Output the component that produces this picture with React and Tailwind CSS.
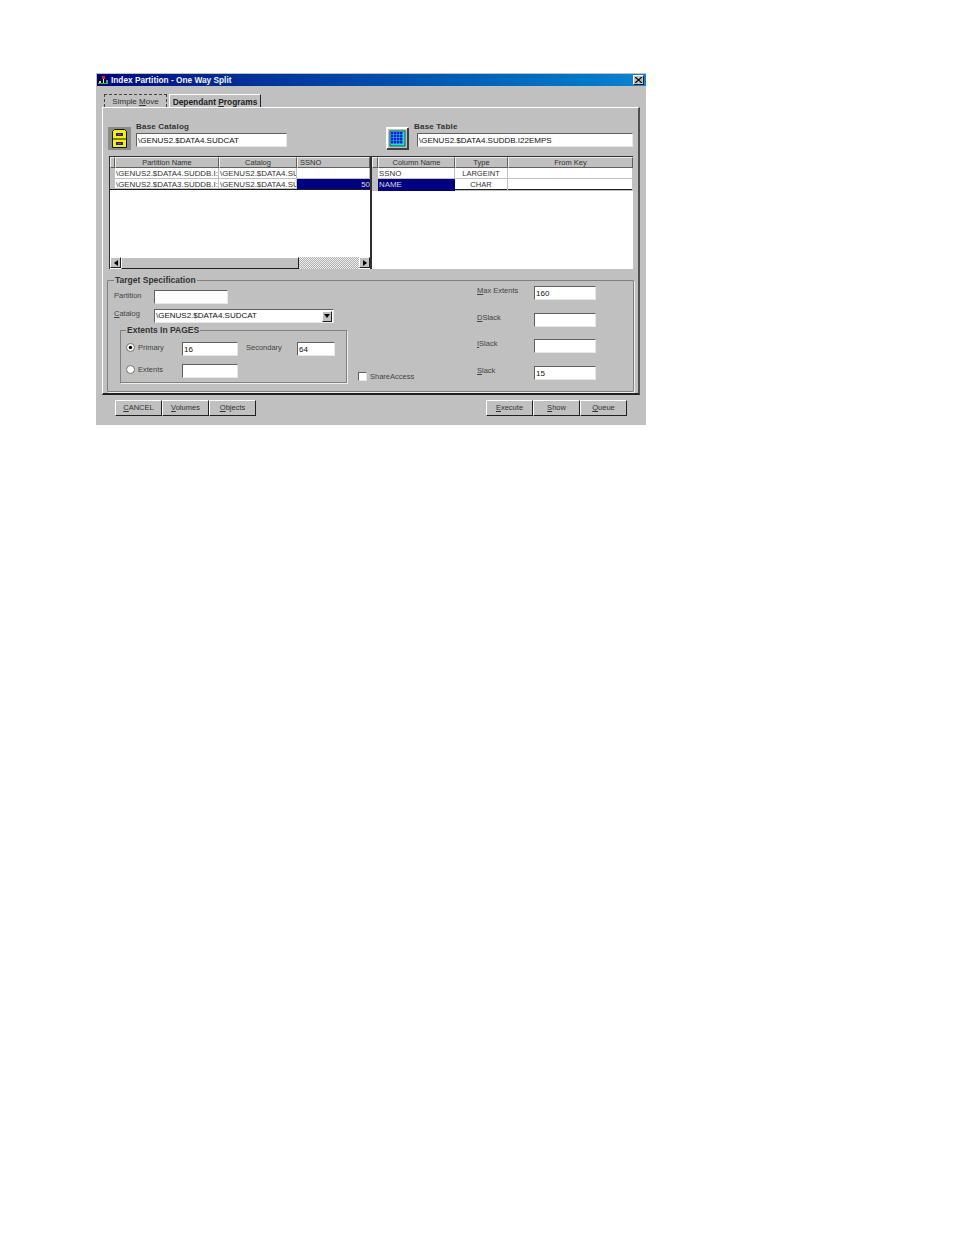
import React from 'react';

const raised = 'border border-t-white border-l-white border-b-[#202020] border-r-[#202020] bg-[#c0c0c0]';
const sunken = 'border border-t-[#606060] border-l-[#606060] border-b-[#e8e8e8] border-r-[#e8e8e8] bg-white';
const cell = 'overflow-hidden whitespace-nowrap border-r border-b border-[#c0c0c0] leading-[12px] px-px';
const head = 'overflow-hidden whitespace-nowrap text-center border border-t-[#eeeeee] border-l-[#eeeeee] border-b-[#606060] border-r-[#606060] bg-[#c0c0c0] text-[7.5px] leading-[9px]';

function Field({ value, className }) {
  return <div className={`${sunken} h-[14px] pl-px text-[8px] leading-[13px] text-[#111] overflow-hidden whitespace-nowrap ${className}`}>{value}</div>;
}

function Btn({ hot, rest }) {
  return (
    <button className={`${raised} w-[47px] h-[16px] text-[7.5px] leading-[12px] text-[#333]`}>
      <u>{hot}</u>{rest}
    </button>
  );
}

function AppIcon() {
  return (
    <svg width="12" height="10" viewBox="0 0 12 10" className="shrink-0">
      <rect width="12" height="10" fill="#000060" />
      <rect x="1" y="8" width="10" height="1" fill="#20c040" />
      <rect x="5" y="1" width="3" height="3" fill="#e02020" />
      <rect x="6" y="4" width="1" height="4" fill="#e0e0e0" />
      <rect x="2" y="6" width="2" height="2" fill="#e0e040" />
      <rect x="9" y="5" width="2" height="3" fill="#30c060" />
    </svg>
  );
}

function CatalogIcon() {
  return (
    <svg width="23" height="23" viewBox="0 0 23 23" className="shrink-0">
      <rect width="23" height="23" fill="#8a8a8a" />
      <path d="M4.5 4.5 6.5 2.5h10l2 2v16h-14z" fill="#f4f400" stroke="#111" />
      <path d="M4.5 12h14" stroke="#111" />
      <rect x="8" y="6" width="7" height="3" fill="#2020a0" />
      <rect x="10" y="7" width="3" height="1" fill="#e03030" />
      <rect x="8" y="15" width="7" height="3" fill="#2020a0" />
      <rect x="10" y="16" width="3" height="1" fill="#e03030" />
    </svg>
  );
}

function GridIcon() {
  return (
    <svg width="23" height="23" viewBox="0 0 23 23" className="shrink-0">
      <rect width="23" height="23" fill="#c0c0c0" />
      <path d="M1 22V1h21" fill="none" stroke="#fff" strokeWidth="2" />
      <path d="M1 22h21V1" fill="none" stroke="#404040" strokeWidth="2" />
      <rect x="4" y="4" width="15" height="15" fill="#20e0c8" stroke="#006060" />
      {[5, 8, 11, 14].map(x => [5, 8, 11, 14].map(y => (
        <rect key={`${x}-${y}`} x={x} y={y} width="2.5" height="2.5" fill="#1818e0" />
      )))}
    </svg>
  );
}

function Radio({ on }) {
  return (
    <svg width="9" height="9" viewBox="0 0 9 9" className="shrink-0 -mt-[4px]">
      <circle cx="4.5" cy="4.5" r="4" fill="#fff" stroke="#707070" />
      {on && <circle cx="4.5" cy="4.5" r="1.7" fill="#000" />}
    </svg>
  );
}

function Arrow({ dir }) {
  return (
    <div className={`${raised} w-[11px] h-[11px] flex items-center justify-center shrink-0`}>
      <svg width="4" height="6" viewBox="0 0 4 6">
        <path d={dir === 'l' ? 'M4 0v6L0 3z' : 'M0 0v6l4-3z'} fill="#000" />
      </svg>
    </div>
  );
}

export default function App() {
  return (
    <div className="h-[1235px] bg-white pt-[73px] pl-[96px] text-[#333]" style={{ fontFamily: '"Liberation Sans", Arial, sans-serif' }}>
      <div className="w-[550px] h-[352px] bg-[#c0c0c0] flex flex-col">
        {/* title bar */}
        <div className="h-[12px] mt-px ml-px flex items-center bg-gradient-to-r from-[#000080] to-[#1084d0] pr-[2px] shrink-0">
          <AppIcon />
          <span className="ml-[2px] text-[8.3px] font-bold text-[#f4f4f4] leading-[12px]">Index Partition - One Way Split</span>
          <div className={`${raised} ml-auto w-[11px] h-[10px] flex items-center justify-center`}>
            <svg width="7" height="6" viewBox="0 0 7 6"><path d="M0 0l7 6M7 0L0 6" stroke="#000" strokeWidth="1.2" /></svg>
          </div>
        </div>

        {/* tabs */}
        <div className="flex h-[13px] ml-[8px] mt-[8px] shrink-0 leading-[12px]">
          <div className="w-[63px] border border-dashed border-[#444] border-b-0 pt-px text-center text-[8px]">Simple <u>M</u>ove</div>
          <div className="w-[92px] ml-[2px] border-t border-l border-t-white border-l-white border-r border-r-[#202020] pt-px text-center font-bold text-[8.4px] text-[#222]">Dependant <u>P</u>rograms</div>
        </div>

        {/* tab page */}
        <div className="mx-[6px] h-[288px] border-t border-l border-t-white border-l-white border-r-2 border-r-[#505050] border-b-2 border-b-[#202020] flex flex-col shrink-0">
          <div className="flex h-[27px] mt-[15px] px-[5px] shrink-0">
            <div className="flex w-[278px]">
              <div className="mt-[4px]"><CatalogIcon /></div>
              <div className="ml-[5px]">
                <div className="font-bold text-[8px] leading-[10px] tracking-[0.2px] h-[7px] -mt-[1px] mb-[4px] text-[#333]">Base Catalog</div>
                <Field value={'\\GENUS2.$DATA4.SUDCAT'} className="w-[151px]" />
              </div>
            </div>
            <div className="flex ml-px">
              <div className="mt-[4px]"><GridIcon /></div>
              <div className="ml-[5px]">
                <div className="font-bold text-[8px] leading-[10px] tracking-[0.2px] h-[7px] -mt-[1px] mb-[4px] text-[#333]">Base Table</div>
                <Field value={'\\GENUS2.$DATA4.SUDDB.I22EMPS'} className="w-[216px] ml-[3px]" />
              </div>
            </div>
          </div>

          {/* grids */}
          <div className="flex h-[113px] ml-[6px] mt-[6px] w-[524px] shrink-0 text-[7.9px] text-[#333]">
            <div className="w-[263px] bg-white border-t border-l border-[#303030] border-r-2 border-r-[#303030] flex flex-col">
              <div className="grid grid-cols-[5px_104px_78px_73px] h-[11px]">
                <div className={head}></div>
                <div className={head}>Partition Name</div>
                <div className={head}>Catalog</div>
                <div className={`${head} text-left pl-[2px]`}>SSNO</div>
              </div>
              <div className="grid grid-cols-[5px_104px_78px_73px] h-[11px]">
                <div className="bg-[#c0c0c0]"></div>
                <div className={cell}>{'\\GENUS2.$DATA4.SUDDB.I:'}</div>
                <div className={cell}>{'\\GENUS2.$DATA4.SUDCAT'}</div>
                <div className={cell}></div>
              </div>
              <div className="grid grid-cols-[5px_104px_78px_73px] h-[11px] border-b border-[#202020]">
                <div className="bg-[#c0c0c0]"></div>
                <div className={cell}>{'\\GENUS2.$DATA3.SUDDB.I:'}</div>
                <div className={cell}>{'\\GENUS2.$DATA4.SUDCAT'}</div>
                <div className="bg-[#000080] text-[#dddddd] text-right leading-[12px] overflow-hidden">50</div>
              </div>
              <div className="flex-1"></div>
              <div className="h-[12px] flex">
                <Arrow dir="l" />
                <div className={`${raised} w-[178px]`}></div>
                <div className="flex-1 bg-[repeating-conic-gradient(#b0b0b0_0_25%,#eeeeee_0_50%)] bg-[length:2px_2px]"></div>
                <Arrow dir="r" />
              </div>
            </div>
            <div className="w-[261px] bg-white border-t border-[#303030] flex flex-col">
              <div className="grid grid-cols-[6px_77px_53px_125px] h-[11px]">
                <div className={head}></div>
                <div className={head}>Column Name</div>
                <div className={head}>Type</div>
                <div className={head}>From Key</div>
              </div>
              <div className="grid grid-cols-[6px_77px_53px_125px] h-[11px]">
                <div className="bg-[#c0c0c0]"></div>
                <div className={cell}>SSNO</div>
                <div className={`${cell} text-center text-[7.5px]`}>LARGEINT</div>
                <div className={cell}></div>
              </div>
              <div className="grid grid-cols-[6px_77px_53px_125px] h-[11px] border-b border-[#202020]">
                <div className="bg-[#c0c0c0]"></div>
                <div className="bg-[#000080] text-[#dddddd] leading-[12px] px-px">NAME</div>
                <div className={`${cell} text-center text-[7.5px]`}>CHAR</div>
                <div className={cell}></div>
              </div>
            </div>
          </div>

          {/* target specification */}
          <fieldset className="mx-[4px] mt-[6px] h-[117px] border border-[#808080] rounded-[1px] shadow-[1px_1px_0_#eeeeee] px-[6px] flex-none">
            <legend className="font-bold text-[8.5px] leading-[10px] px-px text-[#333]">Target Specification</legend>
            <div className="flex text-[7.5px] leading-[10px] text-[#444]">
              <div className="w-[233px] shrink-0">
                <div className="flex items-center mt-[5px] h-[14px]">
                  <span className="w-[40px] -mt-[2px]">Partition</span>
                  <Field value="" className="w-[74px]" />
                </div>
                <div className="flex items-center mt-[5px] h-[14px]">
                  <span className="w-[40px] -mt-[5px]"><u>C</u>atalog</span>
                  <div className={`${sunken} w-[180px] h-[14px] flex items-center justify-between pl-px pr-px text-[8px] text-[#111]`}>
                    <span>{'\\GENUS2.$DATA4.SUDCAT'}</span>
                    <div className={`${raised} w-[10px] h-[11px] flex items-center justify-center`}>
                      <svg width="6" height="4" viewBox="0 0 6 4"><path d="M0 0h6L3 4z" fill="#000" /></svg>
                    </div>
                  </div>
                </div>
                <fieldset className="ml-[6px] mt-[2px] w-[227px] h-[58px] border border-[#808080] shadow-[1px_1px_0_#eeeeee] px-[5px]">
                  <legend className="font-bold text-[8.5px] leading-[10px] px-px text-[#333]">Extents In PAGES</legend>
                  <div className="flex items-center mt-[7px] h-[14px]">
                    <Radio on />
                    <span className="ml-[3px] w-[44px] -mt-[3px]">Primary</span>
                    <Field value="16" className="w-[56px]" />
                    <span className="ml-[8px] w-[51px] -mt-[2px]">Secondary</span>
                    <Field value="64" className="w-[38px]" />
                  </div>
                  <div className="flex items-center mt-[8px] h-[14px]">
                    <Radio />
                    <span className="ml-[3px] w-[44px] -mt-[2px]">Extents</span>
                    <Field value="" className="w-[56px]" />
                  </div>
                </fieldset>
              </div>
              <div className="w-[130px] flex items-start pt-[86px] pl-[11px] shrink-0">
                <div className={`${sunken} w-[9px] h-[9px] mt-[1px] shrink-0`}></div>
                <span className="ml-[3px] whitespace-nowrap mt-[1px]">ShareAccess</span>
              </div>
              <div className="w-[120px] shrink-0 pt-[1px] flex flex-col gap-[12.5px]">
                {[['M', 'ax Extents', '160'], ['D', 'Slack', ''], ['I', 'Slack', ''], ['S', 'lack', '15']].map(([hot, rest, val]) => (
                  <div key={hot} className="flex items-start h-[14px]">
                    <span className="w-[57px]"><u>{hot}</u>{rest}</span>
                    <Field value={val} className="w-[62px]" />
                  </div>
                ))}
              </div>
            </div>
          </fieldset>
        </div>

        {/* command buttons */}
        <div className="flex justify-between px-[19px] mt-[5px]">
          <div className="flex">
            <Btn hot="C" rest="ANCEL" />
            <Btn hot="V" rest="olumes" />
            <Btn hot="O" rest="bjects" />
          </div>
          <div className="flex">
            <Btn hot="E" rest="xecute" />
            <Btn hot="S" rest="how" />
            <Btn hot="Q" rest="ueue" />
          </div>
        </div>
      </div>
    </div>
  );
}
